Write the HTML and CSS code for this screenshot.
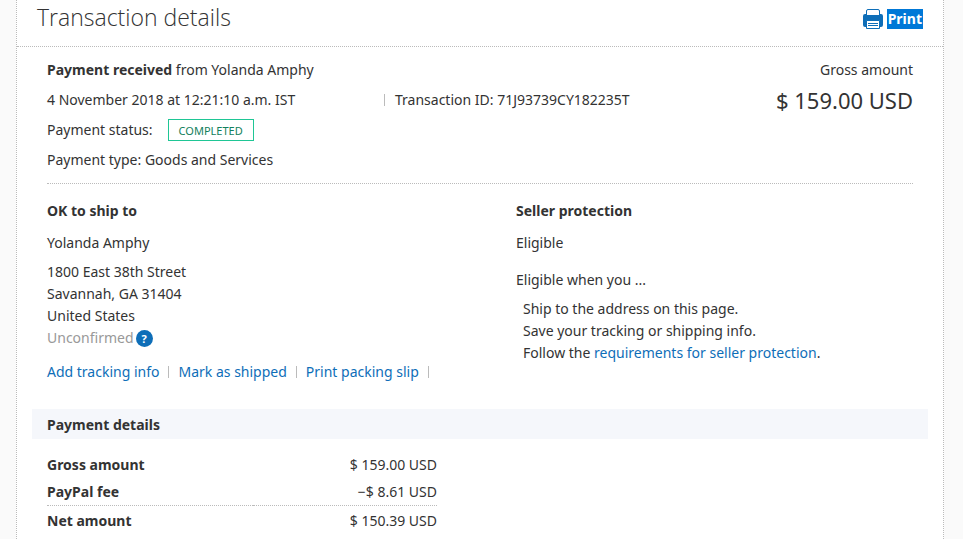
FILE: index.html
```html
<!DOCTYPE html>
<html lang="en">
<head>
    <meta charset="UTF-8">
    <meta name="viewport" content="width=device-width, initial-scale=1.0">
    <title>Transaction details</title>
    <link rel="stylesheet" href="styles.css">
</head>
<body>
    <main class="panel">
        <header class="panel-header">
            <h1>Transaction details</h1>
            <a class="print" href="#">
                <svg width="20" height="20" viewBox="0 0 20 20" aria-hidden="true">
                    <path d="M3.500 7V2a1.500 1.500 0 0 1 1.500-1.500h10A1.500 1.500 0 0 1 16.500 2v5" fill="#fff" stroke="#0e6eb8"/>
                    <path d="M2 5h2v1h12V5h2a2 2 0 0 1 2 2v9a2 2 0 0 1-2 2H2a2 2 0 0 1-2-2V7a2 2 0 0 1 2-2z" fill="#0e6eb8"/>
                    <path d="M3.500 11.500h13v8h-13z" fill="#fff" stroke="#0e6eb8"/>
                    <path d="M5 14.500h10M5 16.500h10" stroke="#0e6eb8"/>
                </svg>
                <span class="print-label">Print</span>
            </a>
        </header>

        <section class="summary">
            <div class="summary-info">
                <p><strong>Payment received</strong> from Yolanda Amphy</p>
                <div class="summary-row">
                    <p class="date">4 November 2018 at 12:21:10 a.m. IST</p>
                    <p class="transaction-id">Transaction ID: 71J93739CY182235T</p>
                </div>
                <p class="status-row">Payment status: <span class="status">COMPLETED</span></p>
                <p>Payment type: Goods and Services</p>
            </div>
            <div class="gross">
                <p>Gross amount</p>
                <p class="gross-amount">$ 159.00 USD</p>
            </div>
        </section>

        <div class="columns">
            <section>
                <h2>OK to ship to</h2>
                <p class="lead">Yolanda Amphy</p>
                <address>
                    1800 East 38th Street<br>
                    Savannah, GA 31404<br>
                    United States
                </address>
                <p class="unconfirmed">Unconfirmed <button class="help" type="button" aria-label="Help">?</button></p>
                <ul class="actions">
                    <li><a href="#">Add tracking info</a></li>
                    <li><a href="#">Mark as shipped</a></li>
                    <li><a href="#">Print packing slip</a></li>
                </ul>
            </section>
            <section>
                <h2>Seller protection</h2>
                <p class="lead">Eligible</p>
                <p class="when">Eligible when you ...</p>
                <ul class="rules">
                    <li>Ship to the address on this page.</li>
                    <li>Save your tracking or shipping info.</li>
                    <li>Follow the <a href="#">requirements for seller protection</a>.</li>
                </ul>
            </section>
        </div>

        <section class="payment">
            <h2 class="payment-title">Payment details</h2>
            <table class="amounts">
                <tr>
                    <th scope="row">Gross amount</th>
                    <td>$ 159.00 USD</td>
                </tr>
                <tr>
                    <th scope="row">PayPal fee</th>
                    <td>−$ 8.61 USD</td>
                </tr>
                <tr class="net">
                    <th scope="row">Net amount</th>
                    <td>$ 150.39 USD</td>
                </tr>
            </table>
        </section>
    </main>
</body>
</html>
```

FILE: styles.css
```css
* {
    box-sizing: border-box;
}
body {
    margin: 0;
    background-color: #fafafa;
    color: #333;
    font-family: "Noto Sans", "Open Sans", sans-serif;
    font-size: 14px;
    line-height: 22px;
}
h1, h2, p, ul {
    margin: 0;
    padding: 0;
}
ul {
    list-style: none;
}
h2 {
    font-size: 14px;
    font-weight: bold;
}
a {
    color: #0e6eb8;
    text-decoration: none;
}
.panel {
    min-height: 100vh;
    margin: 0 19px 0 16px;
    padding-bottom: 4px;
    background: white;
    border-left: 1px dotted #bbb;
    border-right: 1px dotted #bbb;
}
.panel-header {
    display: flex;
    justify-content: space-between;
    align-items: flex-start;
    height: 47px;
    padding: 0 20px;
    border-bottom: 1px dotted #bbb;
}
h1 {
    font-family: "Open Sans", sans-serif;
    font-size: 23px;
    font-weight: 300;
    line-height: 34px;
}
.print {
    display: flex;
    gap: 4px;
    padding-top: 9px;
    font-weight: bold;
    line-height: 20px;
}
.print-label {
    padding: 0 1px;
    background: #0078d7;
    color: white;
}
.summary {
    display: flex;
    justify-content: space-between;
    margin: 0 30px;
    padding: 12px 0 12px;
    border-bottom: 1px dotted #bbb;
}
.summary-info {
    display: flex;
    flex-direction: column;
    gap: 8px;
}
.summary-row {
    display: flex;
}
.date {
    width: 337px;
}
.transaction-id {
    display: flex;
    align-items: center;
    gap: 10px;
}
.transaction-id::before,
.actions li::after {
    content: "";
    width: 1px;
    height: 12px;
    background: #bbb;
}
.status-row {
    display: flex;
    gap: 15px;
}
.status {
    height: 22px;
    padding: 0 10px;
    border: 1px solid #1fc695;
    color: #12805c;
    font-size: 11px;
    line-height: 21px;
}
.gross {
    display: flex;
    flex-direction: column;
    gap: 8px;
    text-align: right;
}
.gross-amount {
    font-size: 22px;
}
.columns {
    display: grid;
    grid-template-columns: 469fr 397fr;
    padding: 16px 30px 26px;
}
.lead {
    margin-top: 10px;
}
address {
    margin-top: 7px;
    font-style: normal;
}
.unconfirmed {
    display: flex;
    align-items: center;
    gap: 2px;
    color: #999;
}
.help {
    width: 17px;
    height: 17px;
    padding: 0;
    border: none;
    border-radius: 50%;
    background: #0e6eb8;
    color: white;
    font: bold 11px/17px "Noto Sans", sans-serif;
}
.actions {
    display: flex;
    gap: 9px;
    margin-top: 12px;
}
.actions li {
    display: flex;
    align-items: center;
    gap: 9px;
    white-space: nowrap;
}
.when {
    margin-top: 15px;
}
.rules {
    margin-top: 7px;
    padding-left: 7px;
}
.payment {
    margin: 0 15px;
}
.payment-title {
    padding: 5px 15px 3px;
    background: #f5f7fb;
}
.amounts {
    width: 390px;
    margin: 12px 15px 0;
    border-collapse: collapse;
}
.amounts th,
.amounts td {
    padding: 3px 0 2px;
}
.amounts th {
    text-align: left;
}
.amounts td {
    text-align: right;
}
.amounts .net {
    border-top: 1px dotted #bbb;
}
.amounts .net th,
.amounts .net td {
    padding: 4px 0 0;
}
```
